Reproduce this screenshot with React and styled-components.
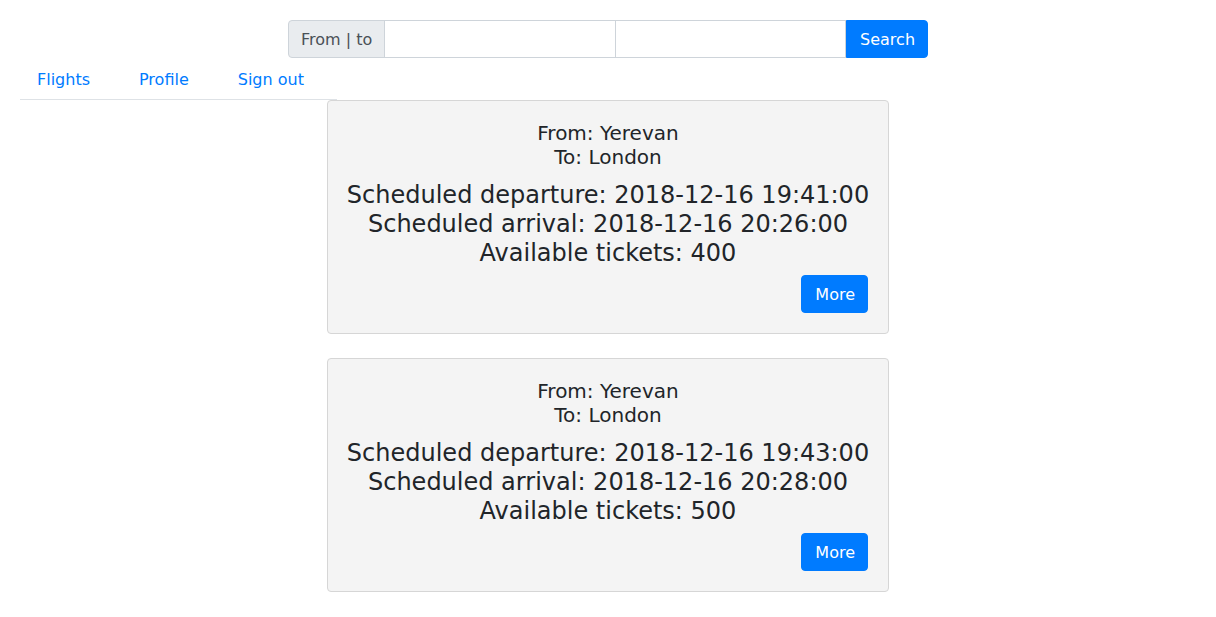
import React from 'react';
import styled, { createGlobalStyle } from 'styled-components';

const GlobalStyle = createGlobalStyle`
  body {
    margin: 0;
    font-family: "DejaVu Sans", sans-serif;
    font-size: 16px;
    line-height: 1.5;
    color: #212529;
    background: #fff;
  }
  * { box-sizing: border-box; }
`;

const Page = styled.div`
  padding: 20px 20px 0;
`;

const SearchForm = styled.form`
  display: flex;
  width: 640px;
  height: 38px;
  margin: 0 auto;
`;

const Addon = styled.span`
  display: flex;
  align-items: center;
  padding: 1px 12px 0;
  background: #e9ecef;
  border: 1px solid #ced4da;
  border-radius: 4px 0 0 4px;
  color: #495057;
  white-space: nowrap;
`;

const Field = styled.input`
  flex: 1;
  min-width: 0;
  margin-left: -1px;
  border: 1px solid #ced4da;
  border-radius: 0;
  font: inherit;
  padding: 6px 12px;
  outline: none;
`;

const Button = styled.button`
  font-family: inherit;
  font-size: 16px;
  line-height: 1.5;
  color: #fff;
  background: #007bff;
  border: 1px solid #007bff;
  padding: 7px 12px 5px 13px;
  height: 38px;
  border-radius: ${(p) => (p.$joined ? '0 4px 4px 0' : '4px')};
  cursor: pointer;
  white-space: nowrap;
`;

const Nav = styled.ul`
  display: flex;
  width: 317px;
  list-style: none;
  margin: 1px 0 0;
  padding: 0;
  border-bottom: 1px solid #dee2e6;
`;

const NavItem = styled.li`
  flex-shrink: 0;
`;

const NavLink = styled.a`
  display: block;
  padding: 9px 16px 7px 17px;
  margin-right: 16px;
  color: #007bff;
  text-decoration: none;
  white-space: nowrap;
`;

const Cards = styled.div`
  display: flex;
  flex-direction: column;
  align-items: center;
  gap: 24px;
`;

const Card = styled.div`
  width: 562px;
  background: #f4f4f4;
  border: 1px solid #d6d6d6;
  border-radius: 4px;
  padding: 20px 18px;
  text-align: center;
  display: flex;
  flex-direction: column;
`;

const Route = styled.h5`
  margin: 0 0 12px;
  font-size: 20px;
  font-weight: 400;
  line-height: 24px;
`;

const Details = styled.h4`
  margin: 0 0 7px;
  font-size: 24px;
  font-weight: 400;
  line-height: 29px;
  white-space: nowrap;
`;

const Actions = styled.div`
  display: flex;
  justify-content: flex-end;
  padding-right: 2px;
`;

const flights = [
  { from: 'Yerevan', to: 'London', dep: '2018-12-16 19:41:00', arr: '2018-12-16 20:26:00', tickets: 400 },
  { from: 'Yerevan', to: 'London', dep: '2018-12-16 19:43:00', arr: '2018-12-16 20:28:00', tickets: 500 },
];

export default function App() {
  return (
    <Page>
      <GlobalStyle />
      <SearchForm onSubmit={(e) => e.preventDefault()}>
        <Addon>From | to</Addon>
        <Field type="text" />
        <Field type="text" />
        <Button $joined type="submit">Search</Button>
      </SearchForm>
      <Nav>
        <NavItem><NavLink href="#">Flights</NavLink></NavItem>
        <NavItem><NavLink href="#">Profile</NavLink></NavItem>
        <NavItem><NavLink href="#">Sign out</NavLink></NavItem>
      </Nav>
      <Cards>
        {flights.map((f, i) => (
          <Card key={i}>
            <Route>
              From: {f.from}
              <br />
              To: {f.to}
            </Route>
            <Details>
              Scheduled departure: {f.dep}
              <br />
              Scheduled arrival: {f.arr}
              <br />
              Available tickets: {f.tickets}
            </Details>
            <Actions>
              <Button type="button">More</Button>
            </Actions>
          </Card>
        ))}
      </Cards>
    </Page>
  );
}
